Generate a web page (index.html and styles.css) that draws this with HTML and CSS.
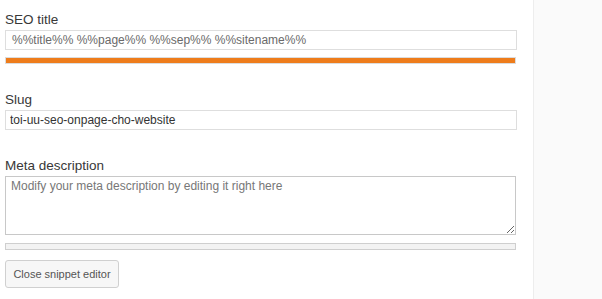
FILE: index.html
```html
<!DOCTYPE html>
<html>
  <head>
    <title>Snippet Editor</title>
    <link rel="stylesheet" href="styles.css">
  </head>
  <body>
    <div class="layout">
      <div class="editor">
        <div class="field first">
          <label class="field-label">SEO title</label>
          <div class="title-input">%%title%% %%page%% %%sep%% %%sitename%%</div>
          <div class="progress">
            <div class="progress-fill ok" style="width: 100%"></div>
          </div>
        </div>

        <div class="field">
          <label class="field-label" for="slug">Slug</label>
          <input class="text-input" id="slug" type="text" value="toi-uu-seo-onpage-cho-website">
        </div>

        <div class="field">
          <label class="field-label" for="metaDesc">Meta description</label>
          <textarea class="text-area" id="metaDesc" placeholder="Modify your meta description by editing it right here"></textarea>
          <div class="progress empty">
            <div class="progress-fill" style="width: 0%"></div>
          </div>
        </div>

        <button class="close-button">Close snippet editor</button>
      </div>
      <div class="sidebar"></div>
    </div>
  </body>
</html>
```

FILE: styles.css
```css
body {
  font-family: "Liberation Sans", Arial, sans-serif;
  margin: 0;
  background: white;
  color: #444;
}

.layout {
  display: flex;
  height: 299px;
}

.editor {
  width: 533px;
  padding-left: 5px;
  box-sizing: border-box;
}

.sidebar {
  flex: 1;
  background: #fafafa;
  border-left: 1px solid #ededed;
}

.field {
  display: flex;
  flex-direction: column;
  width: 512px;
  margin-top: 28px;
}

.field.first {
  margin-top: 12px;
}

.field-label {
  font-size: 13.5px;
  line-height: 16px;
  color: #383838;
  margin-bottom: 2px;
}

.title-input,
.text-input {
  height: 20px;
  box-sizing: border-box;
  border: 1px solid #dedede;
  font-family: "Liberation Sans", Arial, sans-serif;
  font-size: 12px;
  line-height: 18px;
  margin: 0;
}

.title-input {
  padding: 0 6px;
  color: #6a6a6a;
  white-space: nowrap;
  overflow: hidden;
}

.text-input {
  padding: 0 4px;
  color: #333;
  outline: none;
}

.text-area {
  height: 59px;
  box-sizing: border-box;
  width: 511px;
  border: 1px solid #c8c8c8;
  padding: 2px 5px;
  margin: 0;
  font-family: "Liberation Sans", Arial, sans-serif;
  font-size: 12px;
  line-height: 15px;
  color: #333;
  resize: vertical;
}

.text-area::placeholder {
  color: #777;
}

.progress {
  width: 511px;
  height: 7px;
  box-sizing: border-box;
  border: 1px solid #dcdcdc;
  background: #f3f3f3;
  margin-top: 7px;
}

.progress.empty {
  margin-top: 8px;
  border-color: #cfcfcf;
}

.progress-fill {
  height: 100%;
}

.progress-fill.ok {
  background: #ee7c1b;
}

.close-button {
  margin-top: 10px;
  height: 28px;
  width: 114px;
  padding: 0;
  background: #f7f7f7;
  border: 1px solid #d0d0d0;
  border-radius: 3px;
  font-family: "Liberation Sans", Arial, sans-serif;
  font-size: 11px;
  color: #555;
  cursor: pointer;
}
```
